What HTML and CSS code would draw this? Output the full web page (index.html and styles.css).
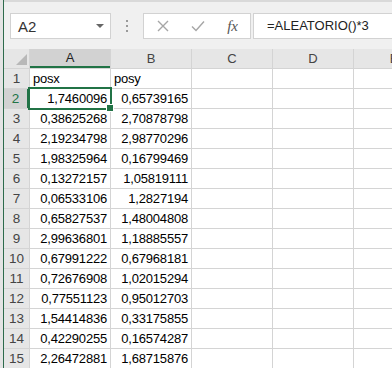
FILE: index.html
```html
<!DOCTYPE html>
<html>
<head>
  <meta charset="utf-8" />
  <title>Hoja de cálculo</title>
  <link rel="stylesheet" href="styles.css">
</head>
<body>
  <div class="edge"></div>
  <div class="window">
    <!-- barra de fórmulas -->
    <div class="formula-bar">
      <div class="name-box">
        <span>A2</span>
        <span class="caret"></span>
      </div>
      <div class="grip"><i></i><i></i><i></i></div>
      <div class="fx-buttons">
        <svg class="icon" width="12" height="12" viewBox="0 0 12 12"><path d="M1 1 L11 11 M11 1 L1 11" stroke="#a6a6a6" stroke-width="1.4" fill="none"/></svg>
        <svg class="icon" width="14" height="12" viewBox="0 0 14 12"><path d="M1 6.5 L5 10.5 L13 1.5" stroke="#a6a6a6" stroke-width="1.4" fill="none"/></svg>
        <span class="fx">fx</span>
      </div>
      <div class="formula">=ALEATORIO()*3</div>
    </div>

    <!-- hoja -->
    <div class="sheet">
      <div class="corner"><span class="tri"></span></div>
      <div class="col-head selected">A</div>
      <div class="col-head">B</div>
      <div class="col-head">C</div>
      <div class="col-head">D</div>
      <div class="col-head">E</div>

      <div class="row-head">1</div><div class="cell text">posx</div><div class="cell text">posy</div><div class="cell"></div><div class="cell"></div><div class="cell"></div>
      <div class="row-head selected">2</div><div class="cell active">1,7460096</div><div class="cell">0,65739165</div><div class="cell"></div><div class="cell"></div><div class="cell"></div>
      <div class="row-head">3</div><div class="cell">0,38625268</div><div class="cell">2,70878798</div><div class="cell"></div><div class="cell"></div><div class="cell"></div>
      <div class="row-head">4</div><div class="cell">2,19234798</div><div class="cell">2,98770296</div><div class="cell"></div><div class="cell"></div><div class="cell"></div>
      <div class="row-head">5</div><div class="cell">1,98325964</div><div class="cell">0,16799469</div><div class="cell"></div><div class="cell"></div><div class="cell"></div>
      <div class="row-head">6</div><div class="cell">0,13272157</div><div class="cell">1,05819111</div><div class="cell"></div><div class="cell"></div><div class="cell"></div>
      <div class="row-head">7</div><div class="cell">0,06533106</div><div class="cell">1,2827194</div><div class="cell"></div><div class="cell"></div><div class="cell"></div>
      <div class="row-head">8</div><div class="cell">0,65827537</div><div class="cell">1,48004808</div><div class="cell"></div><div class="cell"></div><div class="cell"></div>
      <div class="row-head">9</div><div class="cell">2,99636801</div><div class="cell">1,18885557</div><div class="cell"></div><div class="cell"></div><div class="cell"></div>
      <div class="row-head">10</div><div class="cell">0,67991222</div><div class="cell">0,67968181</div><div class="cell"></div><div class="cell"></div><div class="cell"></div>
      <div class="row-head">11</div><div class="cell">0,72676908</div><div class="cell">1,02015294</div><div class="cell"></div><div class="cell"></div><div class="cell"></div>
      <div class="row-head">12</div><div class="cell">0,77551123</div><div class="cell">0,95012703</div><div class="cell"></div><div class="cell"></div><div class="cell"></div>
      <div class="row-head">13</div><div class="cell">1,54414836</div><div class="cell">0,33175855</div><div class="cell"></div><div class="cell"></div><div class="cell"></div>
      <div class="row-head">14</div><div class="cell">0,42290255</div><div class="cell">0,16574287</div><div class="cell"></div><div class="cell"></div><div class="cell"></div>
      <div class="row-head">15</div><div class="cell">2,26472881</div><div class="cell">1,68715876</div><div class="cell"></div><div class="cell"></div><div class="cell"></div>
    </div>
  </div>
</body>
</html>
```

FILE: styles.css
```css
* {
  margin: 0;
  padding: 0;
  box-sizing: border-box;
}

body {
  width: 392px;
  height: 368px;
  overflow: hidden;
  display: flex;
  font-family: 'Liberation Sans', Arial, sans-serif;
  background: #f0f0f0;
  color: #222;
}

.edge {
  width: 4px;
  flex-shrink: 0;
  background: #e4e4e4;
  border-right: 1px solid #2e6b4c;
}

.window {
  flex: 1;
  min-width: 0;
  overflow: hidden;
  border-top: 2px solid #d9d9d9;
}

/* barra de fórmulas */
.formula-bar {
  height: 47px;
  display: flex;
  align-items: flex-start;
  padding-top: 11px;
  padding-left: 6px;
  background: #f0f0f0;
}

.name-box {
  width: 101px;
  height: 26px;
  background: white;
  border: 1px solid #d2d2d2;
  display: flex;
  align-items: center;
  justify-content: space-between;
  padding: 0 6px 0 7px;
  font-size: 15px;
  color: #333;
}

.caret {
  width: 0;
  height: 0;
  border-left: 4px solid transparent;
  border-right: 4px solid transparent;
  border-top: 4px solid #666;
}

.grip {
  width: 32px;
  height: 26px;
  display: flex;
  flex-direction: column;
  align-items: center;
  justify-content: center;
  gap: 3px;
}

.grip i {
  width: 2px;
  height: 2px;
  background: #9a9a9a;
}

.fx-buttons {
  width: 108px;
  height: 26px;
  background: white;
  border: 1px solid #d2d2d2;
  display: flex;
  align-items: center;
  justify-content: space-between;
  padding: 0 12px 0 13px;
}

.fx {
  font-family: 'Liberation Serif', 'Times New Roman', serif;
  font-style: italic;
  font-size: 15px;
  color: #555;
}

.formula {
  flex: 1;
  height: 26px;
  margin-left: 2px;
  background: white;
  border: 1px solid #d2d2d2;
  border-right: none;
  padding-left: 13px;
  font-size: 13px;
  line-height: 24px;
  color: #222;
  white-space: nowrap;
}

/* hoja */
.sheet {
  display: grid;
  grid-template-columns: 25px repeat(5, 80px);
  grid-auto-rows: 19px;
  gap: 1px;
  background: #d4d4d4;
  width: 440px;
}

.corner {
  background: #e6e6e6;
  position: relative;
}

.tri {
  position: absolute;
  right: 2px;
  bottom: 3px;
  width: 0;
  height: 0;
  border-left: 11px solid transparent;
  border-bottom: 11px solid #b8b8b8;
}

.col-head {
  background: #e6e6e6;
  text-align: center;
  font-size: 13px;
  line-height: 19px;
  color: #444;
}

.col-head.selected {
  background: #d2d2d2;
  border-bottom: 2px solid #217346;
  line-height: 18px;
  color: #222;
}

.row-head {
  background: #e6e6e6;
  text-align: center;
  font-size: 13.5px;
  line-height: 19px;
  color: #444;
}

.row-head.selected {
  background: #d2d2d2;
  border-right: 2px solid #217346;
  color: #217346;
}

.cell {
  background: white;
  text-align: right;
  padding: 0 3px;
  font-size: 13px;
  letter-spacing: -0.2px;
  line-height: 20px;
  color: #000;
  white-space: nowrap;
}

.cell.text {
  text-align: left;
}

.cell.active {
  position: relative;
  outline: 2px solid #217346;
  outline-offset: 0;
}

.cell.active::after {
  content: "";
  position: absolute;
  right: -4px;
  bottom: -4px;
  width: 6px;
  height: 6px;
  background: #217346;
  border: 1px solid white;
}
```
